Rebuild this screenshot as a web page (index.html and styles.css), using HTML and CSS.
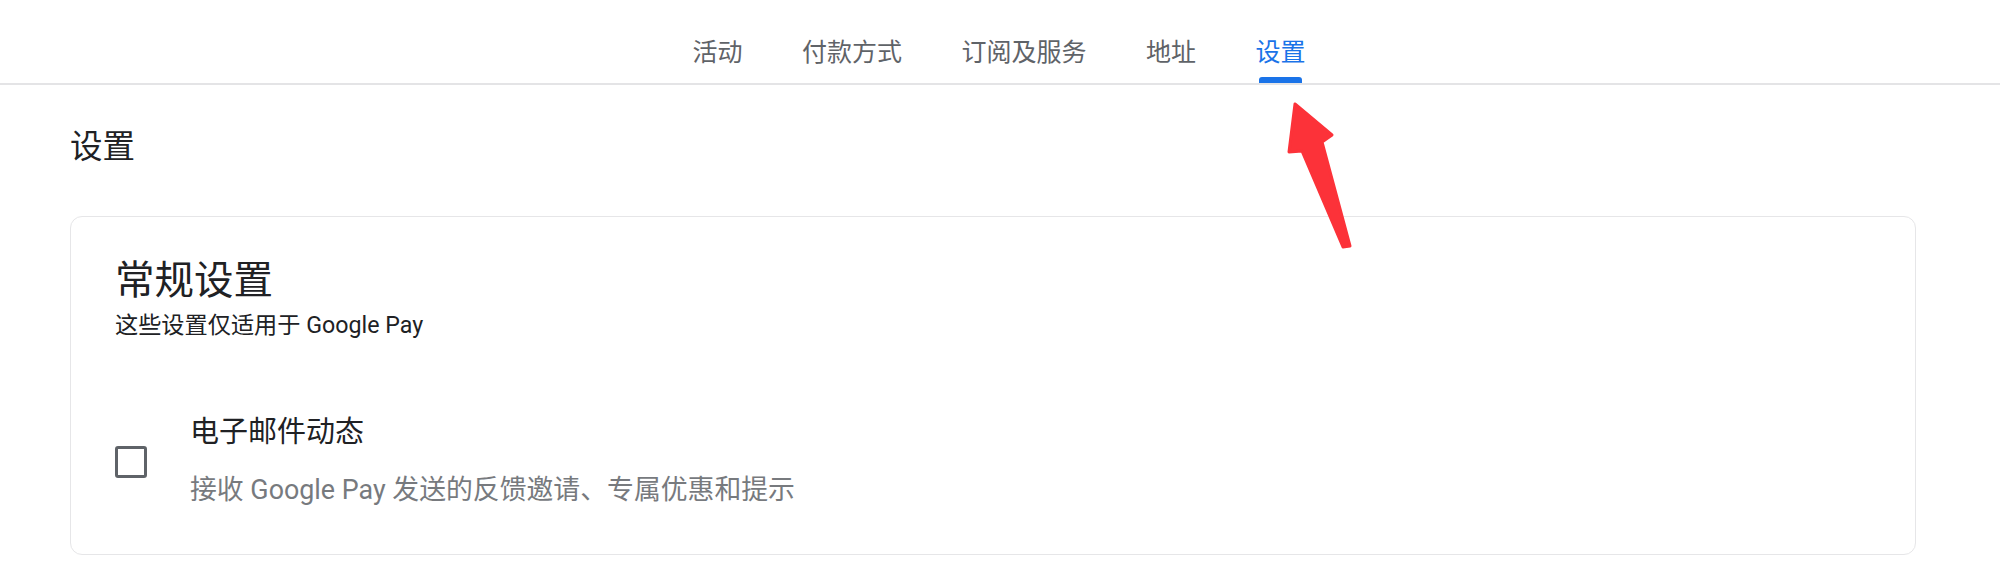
FILE: index.html
```html
<!DOCTYPE html>
<html lang="zh-CN">
<head>
<meta charset="utf-8">
<title>设置</title>
<link rel="stylesheet" href="styles.css">
</head>
<body>
<nav class="topnav">
  <a class="tab">活动</a>
  <a class="tab">付款方式</a>
  <a class="tab">订阅及服务</a>
  <a class="tab">地址</a>
  <a class="tab active">设置</a>
</nav>
<main class="page">
  <h1 class="page-title">设置</h1>
  <section class="card">
    <h2 class="card-title">常规设置</h2>
    <p class="card-sub">这些设置仅适用于 Google Pay</p>
    <div class="option">
      <span class="checkbox"></span>
      <div class="option-text">
        <div class="option-label">电子邮件动态</div>
        <div class="option-desc">接收 Google Pay 发送的反馈邀请、专属优惠和提示</div>
      </div>
    </div>
  </section>
</main>
<svg class="arrow" viewBox="1280 95 80 160" width="80" height="160">
  <polygon points="1295,104 1332,135 1322,142 1350,246 1343,247 1302,151 1289,152" fill="#fc3239" stroke="#fc3239" stroke-width="3" stroke-linejoin="round"/>
</svg>
</body>
</html>
```

FILE: styles.css
```css
html, body {
  margin: 0;
  padding: 0;
  background: #ffffff;
}

body {
  font-family: Roboto, "Noto Sans CJK SC", sans-serif;
  color: #202124;
  position: relative;
  width: 2000px;
  height: 583px;
  overflow: hidden;
}

.topnav {
  display: flex;
  justify-content: center;
  gap: 59.5px;
  height: 83px;
  padding-right: 2px;
  border-bottom: 2px solid #e4e4e6;
}

.tab {
  position: relative;
  box-sizing: border-box;
  height: 83px;
  padding-top: 35px;
  font-size: 25px;
  line-height: 36px;
  color: #5f6368;
  text-decoration: none;
  white-space: nowrap;
}

.tab.active {
  color: #1a73e8;
}

.tab.active::after {
  content: "";
  position: absolute;
  left: 50%;
  bottom: 0;
  width: 43px;
  height: 6px;
  margin-left: -21.5px;
  background: #1a73e8;
  border-radius: 3px 3px 0 0;
}

.page {
  padding: 0 84px 0 70px;
}

.page-title {
  margin: 40px 0 0;
  font-size: 32.5px;
  line-height: 44px;
  font-weight: 400;
  color: #202124;
}

.card {
  margin-top: 47px;
  border: 1.5px solid #e6e6e8;
  border-radius: 12px;
  padding: 40px 44px 46px;
}

.card-title {
  margin: 0;
  font-size: 39.5px;
  line-height: 48px;
  font-weight: 400;
  color: #202124;
}

.card-sub {
  margin: 5px 0 0;
  font-size: 23.2px;
  line-height: 30px;
  color: #202124;
}

.option {
  margin-top: 73px;
  display: flex;
  align-items: center;
  gap: 43px;
}

.checkbox {
  box-sizing: border-box;
  width: 32px;
  height: 32px;
  border: 3.5px solid #5f6368;
  border-radius: 3px;
  flex: none;
  position: relative;
  top: 1px;
}

.option-label {
  font-size: 29px;
  line-height: 38px;
  color: #202124;
}

.option-desc {
  margin-top: 21px;
  font-size: 26.85px;
  line-height: 36px;
  color: #777a7e;
}

.arrow {
  position: absolute;
  left: 1280px;
  top: 95px;
  pointer-events: none;
}
```
